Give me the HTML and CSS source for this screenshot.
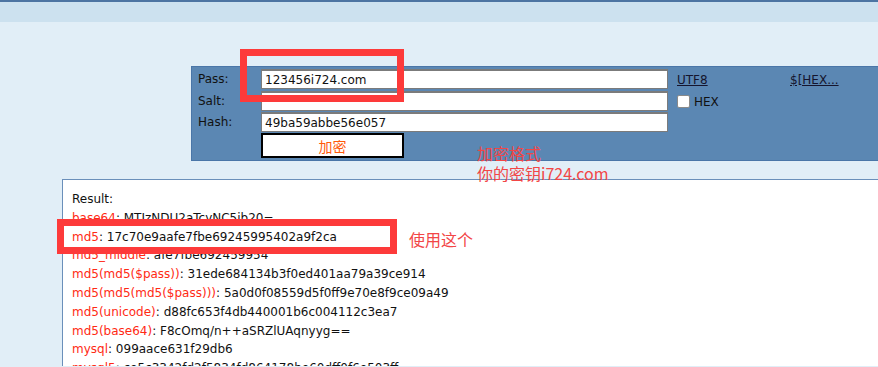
FILE: index.html
```html
<!DOCTYPE html>
<html>
<head>
	<meta charset="UTF-8">
	<title>Hash</title>
	<link rel="stylesheet" href="styles.css">
</head>
<body>
<div id='top'></div>
<form id='panel'>
	<label class='lbl'>Pass:</label>
	<div class='field'><input type='text' value='123456i724.com'></div>
	<div class='opt'><a href="javascript:;">UTF8</a></div>
	<div class='opt'><a href="javascript:;">$[HEX...</a></div>

	<label class='lbl'>Salt:</label>
	<div class='field'><input type='text' value=''></div>
	<div class='opt'><span class='check'></span>HEX</div>
	<div></div>

	<label class='lbl'>Hash:</label>
	<div class='field'><input type='text' value='49ba59abbe56e057'></div>
	<div></div>
	<div></div>

	<div></div>
	<div class='field'><button type='button' id='go'>加密</button></div>
	<div></div>
	<div></div>
</form>
<div id='result'>
	<div>Result:</div>
	<div><span class='k'>base64</span>: MTIzNDU2aTcyNC5jb20=</div>
	<div><span class='k'>md5</span>: 17c70e9aafe7fbe69245995402a9f2ca</div>
	<div><span class='k'>md5_middle</span>: afe7fbe692459954</div>
	<div><span class='k'>md5(md5($pass))</span>: 31ede684134b3f0ed401aa79a39ce914</div>
	<div><span class='k'>md5(md5(md5($pass)))</span>: 5a0d0f08559d5f0ff9e70e8f9ce09a49</div>
	<div><span class='k'>md5(unicode)</span>: d88fc653f4db440001b6c004112c3ea7</div>
	<div><span class='k'>md5(base64)</span>: F8cOmq/n++aSRZlUAqnyyg==</div>
	<div><span class='k'>mysql</span>: 099aace631f29db6</div>
	<div><span class='k'>mysql5</span>: ce5c3342fd2f5834fd864178be60dff0f6e503ff</div>
</div>

<!-- annotations drawn over the screenshot -->
<div class='mark' id='mark-pass'></div>
<div class='mark' id='mark-md5'></div>
<div class='note' id='note-fmt'>加密格式<br>你的密钥i724.com</div>
<div class='note' id='note-use'>使用这个</div>
</body>
</html>
```

FILE: styles.css
```css
html,body{margin:0; padding:0;}
body{background:#e1eef7; font-family:"DejaVu Sans", Verdana, sans-serif; font-size:12px; color:#111; position:relative; height:367px; overflow:hidden;}

#top{height:20px; border-top:2px solid #4c74a2; background:#cce1ef;}

#panel{display:grid; grid-template-columns:64px 416px 113px 1fr; grid-template-rows:22px 21px 21px 25px; margin:44px 0 0 191px; padding:2px 0 2px 5px; background:#5b87b3; border:1px solid #4a76a8; border-right:none;}
.lbl{line-height:21px; padding-left:1px;}
.field input{display:block; box-sizing:border-box; width:407px; height:20px; margin:0; padding:0 3px; border:1px solid #7b7b7b; border-top:2px solid #7b7b7b; background:#fff; font:12px "DejaVu Sans", Verdana, sans-serif; color:#111; outline:none;}
.opt{line-height:20px; display:flex; align-items:center;}
.opt a{color:#15152e; text-decoration:underline;}
.check{display:inline-block; width:11px; height:11px; background:#fff; border:1px solid #8a8a8a; border-radius:2px; margin:0 4px 0 0;}

#go{display:block; box-sizing:border-box; width:143px; height:25px; margin:0; padding:0; background:#fff; border:2px solid #000; font:14px "Noto Sans CJK SC", sans-serif; color:#ff5a0a; line-height:20px;}

#result{margin:18px 0 0 62px; padding:10px 0 0 9px; background:#fff; border-top:1px solid #6a8fba; border-left:1px solid #6a8fba; height:176px; line-height:18.8px; white-space:nowrap; overflow:hidden;}
.k{color:#ff2a14;}

.mark{position:absolute; border:7px solid #fd3a3a;}
#mark-pass{left:240px; top:49px; width:150px; height:39px;}
#mark-md5{left:57px; top:219px; width:326px; height:21px;}
.note{position:absolute; color:#f24646; font:16px/20px "Noto Sans CJK SC", sans-serif;}
#note-fmt{left:477px; top:143px;}
#note-use{left:409px; top:229px;}
```
